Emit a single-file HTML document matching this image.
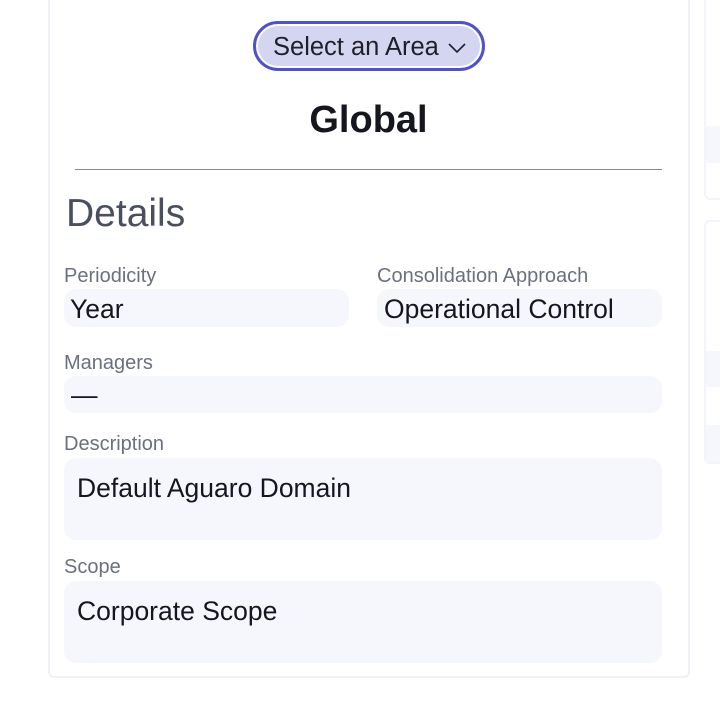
<!DOCTYPE html>
<html><head><style>
body{margin:0;width:720px;height:720px;background:#fff;position:relative;overflow:hidden;font-family:"Liberation Sans","DejaVu Sans",sans-serif;}
.a{position:absolute;}
.card{left:48px;top:-10px;width:642px;height:688px;border:2px solid #f0f1f7;border-radius:6px;box-sizing:border-box;}
.btn{left:253px;top:21px;width:232px;height:50px;box-sizing:border-box;border:3px solid #4f52c9;border-radius:25px;background:#d4d5f1;box-shadow:inset 0 0 0 2px #fff;font-size:25.5px;color:#1e1f2b;line-height:46px;padding-left:17px;white-space:nowrap;}
.lbl{font-size:20px;color:#6b7080;}
.box{background:#f6f7fd;border-radius:12px;color:#15161e;font-size:26.5px;white-space:nowrap;}
</style></head><body>
<div class="a card"></div>
<div class="a" style="left:704px;top:-10px;width:30px;height:210px;border:2px solid #f3f4f9;border-radius:6px;box-sizing:border-box"></div>
<div class="a" style="left:706px;top:126px;width:20px;height:37px;background:#f6f7fd"></div>
<div class="a" style="left:704px;top:220px;width:30px;height:244px;border:2px solid #f3f4f9;border-radius:6px;box-sizing:border-box"></div>
<div class="a" style="left:706px;top:351px;width:20px;height:36px;background:#f6f7fd"></div>
<div class="a" style="left:706px;top:425px;width:20px;height:37px;background:#f6f7fd"></div>
<div class="a btn">Select an Area <svg width="22" height="14" viewBox="0 0 22 14" style="margin-left:0px"><path d="M3 3 L11 11 L19 3" fill="none" stroke="#1e1f2b" stroke-width="1.6"/></svg></div>
<div class="a" style="left:48px;width:639px;top:99px;text-align:center;font-size:38px;font-weight:bold;color:#15161e;padding-left:1px">Global</div>
<div class="a" style="left:75px;top:169px;width:587px;height:1px;background:#8a8a8a"></div>
<div class="a" style="left:66px;top:192px;font-size:39px;color:#4a4f60">Details</div>
<div class="a lbl" style="left:64px;top:265px">Periodicity</div>
<div class="a lbl" style="left:377px;top:265px">Consolidation Approach</div>
<div class="a box" style="left:64px;top:289px;width:285px;height:38px;line-height:40px;padding-left:6px;box-sizing:border-box">Year</div>
<div class="a box" style="left:377px;top:289px;width:285px;height:38px;line-height:40px;padding-left:7px;box-sizing:border-box">Operational Control</div>
<div class="a lbl" style="left:64px;top:352px">Managers</div>
<div class="a box" style="left:64px;top:376px;width:598px;height:37px;line-height:39px;padding-left:7px;box-sizing:border-box">—</div>
<div class="a lbl" style="left:64px;top:433px">Description</div>
<div class="a box" style="left:64px;top:458px;width:598px;height:82px;padding:15px 13px;box-sizing:border-box">Default Aguaro Domain</div>
<div class="a lbl" style="left:64px;top:556px">Scope</div>
<div class="a box" style="left:64px;top:581px;width:598px;height:82px;padding:15px 13px;box-sizing:border-box">Corporate Scope</div>
</body></html>
